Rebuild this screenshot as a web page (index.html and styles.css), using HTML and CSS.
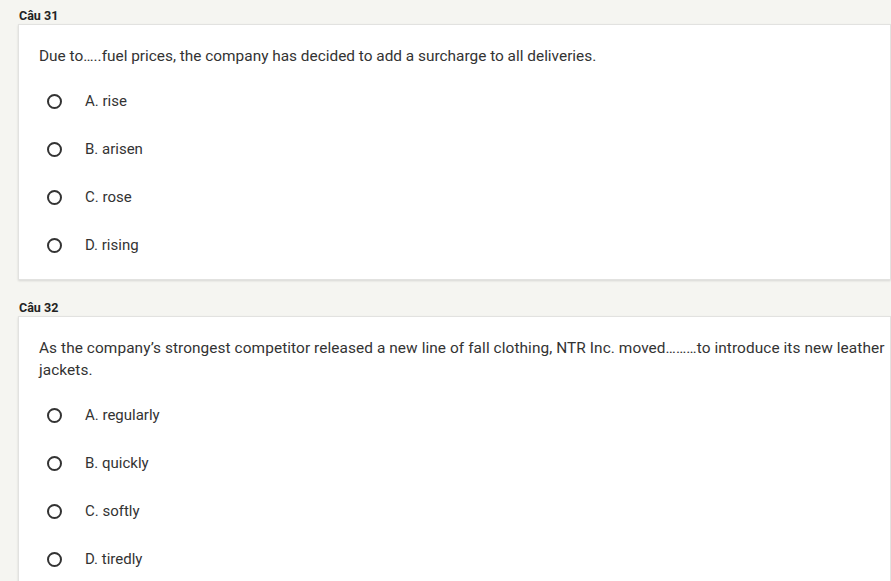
FILE: index.html
```html
<!DOCTYPE html>
<html>
<head>
<meta charset="utf-8">
<link rel="stylesheet" href="styles.css">
</head>
<body>
<div class="page">
  <div class="label">Câu 31</div>
  <div class="card">
    <div class="question">Due to…..fuel prices, the company has decided to add a surcharge to all deliveries.</div>
    <div class="options">
      <div class="option"><span class="radio"></span><span class="text">A. rise</span></div>
      <div class="option"><span class="radio"></span><span class="text">B. arisen</span></div>
      <div class="option"><span class="radio"></span><span class="text">C. rose</span></div>
      <div class="option"><span class="radio"></span><span class="text">D. rising</span></div>
    </div>
  </div>
  <div class="label">Câu 32</div>
  <div class="card">
    <div class="question question-long">As the company’s strongest competitor released a new line of fall clothing, NTR Inc. moved………to introduce its new leather jackets.</div>
    <div class="options">
      <div class="option"><span class="radio"></span><span class="text">A. regularly</span></div>
      <div class="option"><span class="radio"></span><span class="text">B. quickly</span></div>
      <div class="option"><span class="radio"></span><span class="text">C. softly</span></div>
      <div class="option"><span class="radio"></span><span class="text">D. tiredly</span></div>
    </div>
  </div>
</div>
</body>
</html>
```

FILE: styles.css
```css
html, body {
  margin: 0;
  padding: 0;
  background: #f5f5f1;
  font-family: Roboto, "Liberation Sans", sans-serif;
}
.page {
  padding: 8px 0 0 18px;
}
.label {
  font-size: 12.5px;
  font-weight: 700;
  color: #222;
  line-height: 16px;
  padding-left: 1px;
}
.card + .label { margin-top: 20px; }
.card {
  width: 873px;
  background: #fff;
  border: 1px solid #e2e2e0;
  box-shadow: 0 1px 2px rgba(0,0,0,0.12);
  padding: 20px 0 10px 20px;
  box-sizing: border-box;
}
.question {
  font-size: 15.4px;
  line-height: 22px;
  color: #333;
  padding-right: 4px;
}
.question-long {
  letter-spacing: 0.08px;
}
.options {
  margin-top: 10px;
}
.option {
  height: 48px;
  display: flex;
  align-items: center;
}
.radio {
  width: 11px;
  height: 11px;
  border: 2px solid #333;
  border-radius: 50%;
  margin-left: 8px;
  flex: none;
}
.text {
  margin-left: 23px;
  font-size: 15px;
  color: #333;
}
```
